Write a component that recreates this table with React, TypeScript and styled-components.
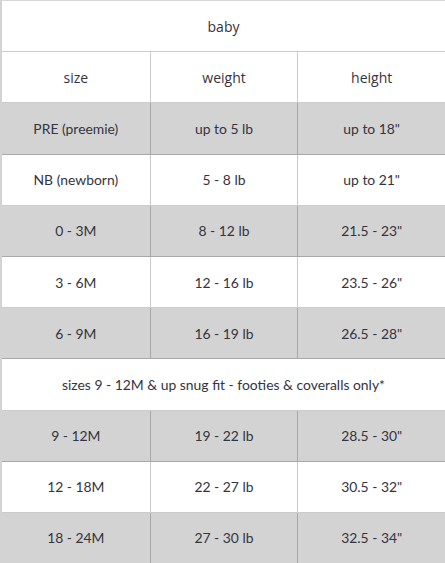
import React from "react";
import styled, { createGlobalStyle } from "styled-components";

const GlobalStyle = createGlobalStyle`
  html, body {
    margin: 0;
    padding: 0;
    background: #ffffff;
  }
`;

const rows = [
  { size: "PRE (preemie)", weight: "up to 5 lb", height: "up to 18\"" },
  { size: "NB (newborn)", weight: "5 - 8 lb", height: "up to 21\"" },
  { size: "0 - 3M", weight: "8 - 12 lb", height: "21.5 - 23\"" },
  { size: "3 - 6M", weight: "12 - 16 lb", height: "23.5 - 26\"" },
  { size: "6 - 9M", weight: "16 - 19 lb", height: "26.5 - 28\"" },
];

const rows2 = [
  { size: "9 - 12M", weight: "19 - 22 lb", height: "28.5 - 30\"" },
  { size: "12 - 18M", weight: "22 - 27 lb", height: "30.5 - 32\"" },
  { size: "18 - 24M", weight: "27 - 30 lb", height: "32.5 - 34\"" },
];

const Table = styled.div`
  width: 445px;
  box-sizing: border-box;
  border-left: 2px solid #d3d3d3;
  border-top: 1px solid #d6d6d6;
  color: #33343f;
`;

const Row = styled.div<{ $shaded?: boolean }>`
  display: grid;
  grid-template-columns: repeat(3, 1fr);
  height: 51.2px;
  box-sizing: border-box;
  border-bottom: 1px solid rgba(0, 0, 0, 0.2);
  background: ${(p) => (p.$shaded ? "#d3d3d3" : "#ffffff")};
`;

const Cell = styled.div<{ $head?: boolean }>`
  display: flex;
  align-items: center;
  justify-content: center;
  font-family: ${(p) =>
    p.$head ? '"Open Sans", "Noto Sans", sans-serif' : 'Lato, "Open Sans", sans-serif'};
  font-size: ${(p) => (p.$head ? "14px" : "13.9px")};
  & + & {
    border-left: 1px solid rgba(0, 0, 0, 0.2);
  }
`;

const WideCell = styled(Cell)`
  grid-column: 1 / -1;
`;

const App = () => {
  return (
    <>
      <GlobalStyle />
      <Table>
        <Row>
          <WideCell $head>baby</WideCell>
        </Row>
        <Row>
          <Cell $head>size</Cell>
          <Cell $head>weight</Cell>
          <Cell $head>height</Cell>
        </Row>
        {rows.map((r, i) => (
          <Row key={r.size} $shaded={i % 2 === 0}>
            <Cell>{r.size}</Cell>
            <Cell>{r.weight}</Cell>
            <Cell>{r.height}</Cell>
          </Row>
        ))}
        <Row>
          <WideCell>sizes 9 - 12M &amp; up snug fit - footies &amp; coveralls only*</WideCell>
        </Row>
        {rows2.map((r, i) => (
          <Row key={r.size} $shaded={i % 2 === 0}>
            <Cell>{r.size}</Cell>
            <Cell>{r.weight}</Cell>
            <Cell>{r.height}</Cell>
          </Row>
        ))}
      </Table>
    </>
  );
};

export default App;
